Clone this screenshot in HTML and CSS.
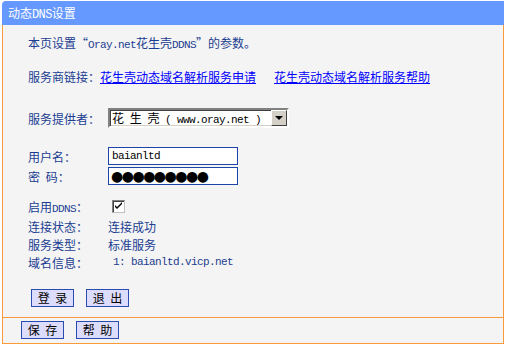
FILE: index.html
```html
<!DOCTYPE html>
<html lang="zh-CN">
<head>
    <meta charset="UTF-8">
    <title>动态DNS设置</title>
    <link rel="stylesheet" href="styles.css">
</head>
<body>
    <div class="panel">
        <div class="panel-title">动态<span class="en">DNS</span>设置</div>
        <div class="panel-body">
            <div class="intro">本页设置“<span class="en">Oray.net</span>花生壳<span class="en">DDNS</span>”的参数。</div>

            <div class="links">
                服务商链接：<a href="#">花生壳动态域名解析服务申请</a><a href="#" class="link-help">花生壳动态域名解析服务帮助</a>
            </div>

            <div class="row row-provider">
                <span class="label">服务提供者：</span>
                <div class="select">
                    <span class="select-text">花 生 壳 <span class="en">( www.oray.net )</span></span>
                    <span class="select-btn"><span class="arrow"></span></span>
                </div>
            </div>

            <div class="row row-user">
                <span class="label">用户名：</span>
                <input type="text" class="field" value="baianltd" readonly>
            </div>
            <div class="row row-pass">
                <span class="label">密 码：</span>
                <input type="text" class="field field-pass" value="●●●●●●●●●" readonly>
            </div>

            <div class="row row-enable">
                <span class="label">启用<span class="en">DDNS</span>：</span>
                <span class="check">
                    <svg width="8" height="8" viewBox="0 0 8 8"><path d="M0 3 L2 5 L7 0 L7 2 L2 7 L0 5 Z" fill="#000"/></svg>
                </span>
            </div>
            <div class="row row-info">
                <span class="label">连接状态：</span>
                <span>连接成功</span>
            </div>
            <div class="row row-info">
                <span class="label">服务类型：</span>
                <span>标准服务</span>
            </div>
            <div class="row row-info">
                <span class="label">域名信息：</span>
                <span class="en domain">1: baianltd.vicp.net</span>
            </div>

            <div class="actions">
                <button class="btn">登 录</button>
                <button class="btn">退 出</button>
            </div>
        </div>
        <div class="panel-foot">
            <button class="btn">保 存</button>
            <button class="btn">帮 助</button>
        </div>
    </div>
</body>
</html>
```

FILE: styles.css
```css
body {
    margin: 0;
    background-color: #fff;
    font-family: "Noto Sans CJK SC", sans-serif;
    font-size: 12px;
    color: #1b3d91;
    word-spacing: 3px;
}

.en {
    font-family: "Liberation Mono", monospace;
    font-size: 11px;
    letter-spacing: -0.6px;
    word-spacing: 0;
}

.panel {
    width: 502px;
    margin: 1px 0 0 2px;
}

.panel-title {
    height: 24px;
    line-height: 24px;
    padding-left: 6px;
    background-color: #6699ff;
    color: #fff;
    border-top-left-radius: 4px;
}

.panel-title .en {
    font-size: 12px;
}

.panel-body {
    background-color: #f4f4f4;
    border-left: 1px solid #f99b3a;
    border-right: 1px solid #f99b3a;
    padding: 9px 0 10px 25px;
}

.intro {
    height: 18px;
    line-height: 18px;
}

.links {
    height: 18px;
    line-height: 18px;
    margin-top: 16px;
    word-spacing: 0;
}

.links a {
    color: #0000ff;
}

.links .link-help {
    margin-left: 18px;
}

.row {
    display: flex;
    align-items: center;
    height: 18px;
}

.label {
    width: 80px;
    flex-shrink: 0;
}

.row-provider {
    height: 20px;
    margin-top: 22px;
}

.select {
    display: flex;
    width: 177px;
    height: 16px;
    border: 2px solid;
    border-color: #808080 #fff #fff #808080;
    box-shadow: inset 1px 1px 0 #404040, inset -1px -1px 0 #d4d0c8;
    background-color: #fff;
    color: #000;
}

.select-text {
    flex: 1;
    padding-left: 2px;
    line-height: 16px;
}

.select-btn {
    display: flex;
    align-items: center;
    justify-content: center;
    box-sizing: border-box;
    width: 16px;
    height: 16px;
    background-color: #d4d0c8;
    border: 1px solid;
    border-color: #fff #404040 #404040 #fff;
}

.arrow {
    width: 0;
    height: 0;
    border-left: 4px solid transparent;
    border-right: 4px solid transparent;
    border-top: 4px solid #000;
}

.row-user {
    margin-top: 19px;
}

.row-pass {
    margin-top: 2px;
}

.field {
    box-sizing: border-box;
    width: 130px;
    height: 18px;
    margin: 0;
    padding: 0 3px;
    border: 1px solid #1e44a8;
    background-color: #fff;
    color: #000;
    font-family: "Liberation Mono", monospace;
    font-size: 11px;
    letter-spacing: -0.6px;
    outline: none;
}

.field-pass {
    font-family: "DejaVu Sans", sans-serif;
    font-size: 14px;
    letter-spacing: -1.5px;
    padding-left: 2px;
}

.row-enable {
    margin-top: 12px;
}

.check {
    display: flex;
    align-items: center;
    justify-content: center;
    box-sizing: border-box;
    width: 13px;
    height: 13px;
    margin-left: 4px;
    border: 1px solid;
    border-color: #808080 #c0c0c0 #c0c0c0 #808080;
    box-shadow: inset 1px 1px 0 #404040;
    background-color: #fff;
}

.row-enable + .row-info {
    margin-top: 2px;
}

.domain {
    margin-left: 5px;
}

.actions {
    display: flex;
    gap: 12px;
    margin-top: 18px;
    padding-left: 3px;
}

.btn {
    width: 43px;
    height: 18px;
    padding: 0;
    border: 1px solid #2a4cb0;
    background-color: #dcdcfc;
    color: #000;
    font-family: "Noto Sans CJK SC", sans-serif;
    font-size: 12px;
    line-height: 16px;
    word-spacing: 3px;
}

.panel-foot {
    display: flex;
    gap: 12px;
    background-color: #f4f4f4;
    border: 1px solid #f99b3a;
    padding: 3px 0 4px 18px;
}
```
